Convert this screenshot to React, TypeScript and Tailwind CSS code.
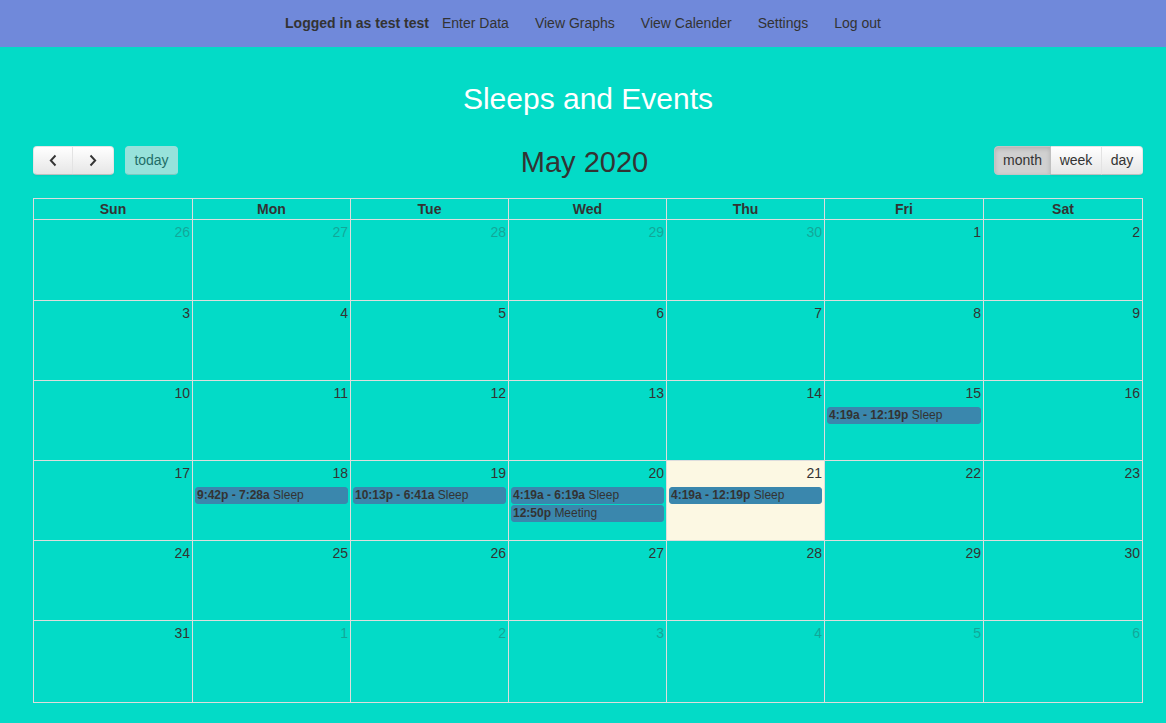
type CalEvent = { time: string; title: string }
type Day = { num: number; other?: boolean; today?: boolean; events?: CalEvent[] }

const weekdays = ['Sun', 'Mon', 'Tue', 'Wed', 'Thu', 'Fri', 'Sat']

const events: Record<number, CalEvent[]> = {
  15: [{ time: '4:19a - 12:19p', title: 'Sleep' }],
  18: [{ time: '9:42p - 7:28a', title: 'Sleep' }],
  19: [{ time: '10:13p - 6:41a', title: 'Sleep' }],
  20: [
    { time: '4:19a - 6:19a', title: 'Sleep' },
    { time: '12:50p', title: 'Meeting' },
  ],
  21: [{ time: '4:19a - 12:19p', title: 'Sleep' }],
}

// april 26 .. june 6
const days: Day[] = [
  ...[26, 27, 28, 29, 30].map((n) => ({ num: n, other: true })),
  ...Array.from({ length: 31 }, (_, i) => ({
    num: i + 1,
    today: i + 1 === 21,
    events: events[i + 1],
  })),
  ...[1, 2, 3, 4, 5, 6].map((n) => ({ num: n, other: true })),
]

const rowHeights = ['h-[81px]', 'h-[80px]', 'h-[80px]', 'h-[80px]', 'h-[80px]', 'h-[82px]']

const btn =
  'h-[29px] px-[8px] text-[14px] text-[#333] border border-[#e6e6e6] border-b-[#bfbfbf] bg-gradient-to-b from-white to-[#e6e6e6] shadow-[inset_0_1px_0_rgba(255,255,255,0.2),0_1px_2px_rgba(0,0,0,0.05)] flex items-center justify-center'

function Chevron({ dir }: { dir: 'left' | 'right' }) {
  return (
    <svg width="10" height="13" viewBox="0 0 10 13">
      <path
        d={dir === 'left' ? 'M7.5 1.5 L2.8 6.5 L7.5 11.5' : 'M2.5 1.5 L7.2 6.5 L2.5 11.5'}
        fill="none"
        stroke="#333"
        strokeWidth="1.9"
      />
    </svg>
  )
}

export default function App() {
  return (
    <div className="min-h-[723px] bg-[#03dbc7] font-['Liberation_Sans',Arial,sans-serif] text-[#333]">
      <nav className="h-[47px] bg-[#7089da] flex items-center justify-center text-[14px] text-[#333]">
        <span className="pl-[13px] font-bold">Logged in as test test</span>
        {['Enter Data', 'View Graphs', 'View Calender', 'Settings', 'Log out'].map((l) => (
          <a key={l} className="px-[13px]">
            {l}
          </a>
        ))}
      </nav>

      <div className="pl-[33px] w-[1143px]">
        <h1 className="mt-[35px] text-center text-white text-[30px] leading-[34px]">
          Sleeps and Events
        </h1>

        <div className="mt-[30px] mb-[21px] flex items-start">
          <div className="flex items-start">
            <div className="flex">
              <button className={btn + ' w-[40px] rounded-l-[4px]'}>
                <Chevron dir="left" />
              </button>
              <button className={btn + ' w-[41px] rounded-r-[4px] border-l-0'}>
                <Chevron dir="right" />
              </button>
            </div>
            <button className="ml-[11px] h-[29px] w-[53px] text-[14px] text-[#333] bg-[#e6e6e6] border border-[#e6e6e6] border-b-[#bfbfbf] rounded-[4px] opacity-65">
              today
            </button>
          </div>
          <h2 className="flex-1 text-center text-[29px] leading-[29px] mt-[2px] pr-[3px]">May 2020</h2>
          <div className="flex">
            <button className="h-[29px] w-[57px] text-[14px] text-[#333] bg-[#d0d0d0] border border-[#c4c4c4] rounded-l-[4px] shadow-[inset_0_2px_4px_rgba(0,0,0,0.15)] flex items-center justify-center">
              month
            </button>
            <button className={btn + ' w-[51px] border-l-0'}>week</button>
            <button className={btn + ' w-[41px] border-l-0 rounded-r-[4px]'}>day</button>
          </div>
        </div>

        <div className="border-l border-t border-[#ddd] w-[1110px]">
          <div className="grid grid-cols-[159px_158px_158px_158px_158px_159px_159px]">
            {weekdays.map((d) => (
              <div
                key={d}
                className="h-[21px] border-r border-b border-[#ddd] text-center font-bold text-[14px] leading-[20px]"
              >
                {d}
              </div>
            ))}
          </div>
          {rowHeights.map((h, r) => (
            <div key={r} className="grid grid-cols-[159px_158px_158px_158px_158px_159px_159px]">
              {days.slice(r * 7, r * 7 + 7).map((day, i) => (
                <div
                  key={i}
                  className={
                    h +
                    ' border-r border-b border-[#ddd] ' +
                    (day.today ? 'bg-[#fcf8e3]' : '')
                  }
                >
                  <div
                    className={
                      'h-[25px] pt-[4px] pr-[2px] text-right text-[14px] leading-[16px] ' +
                      (day.other ? 'opacity-30' : '')
                    }
                  >
                    {day.num}
                  </div>
                  {day.events?.map((e) => (
                    <div
                      key={e.time}
                      className="mt-[1px] mx-[2px] h-[17px] bg-[#3a87ad] border border-[#3a87ad] rounded-[3px] px-[1px] text-[12px] leading-[15px] text-[#333] whitespace-nowrap overflow-hidden"
                    >
                      <span className="font-bold">{e.time}</span> {e.title}
                    </div>
                  ))}
                </div>
              ))}
            </div>
          ))}
        </div>
      </div>
    </div>
  )
}
